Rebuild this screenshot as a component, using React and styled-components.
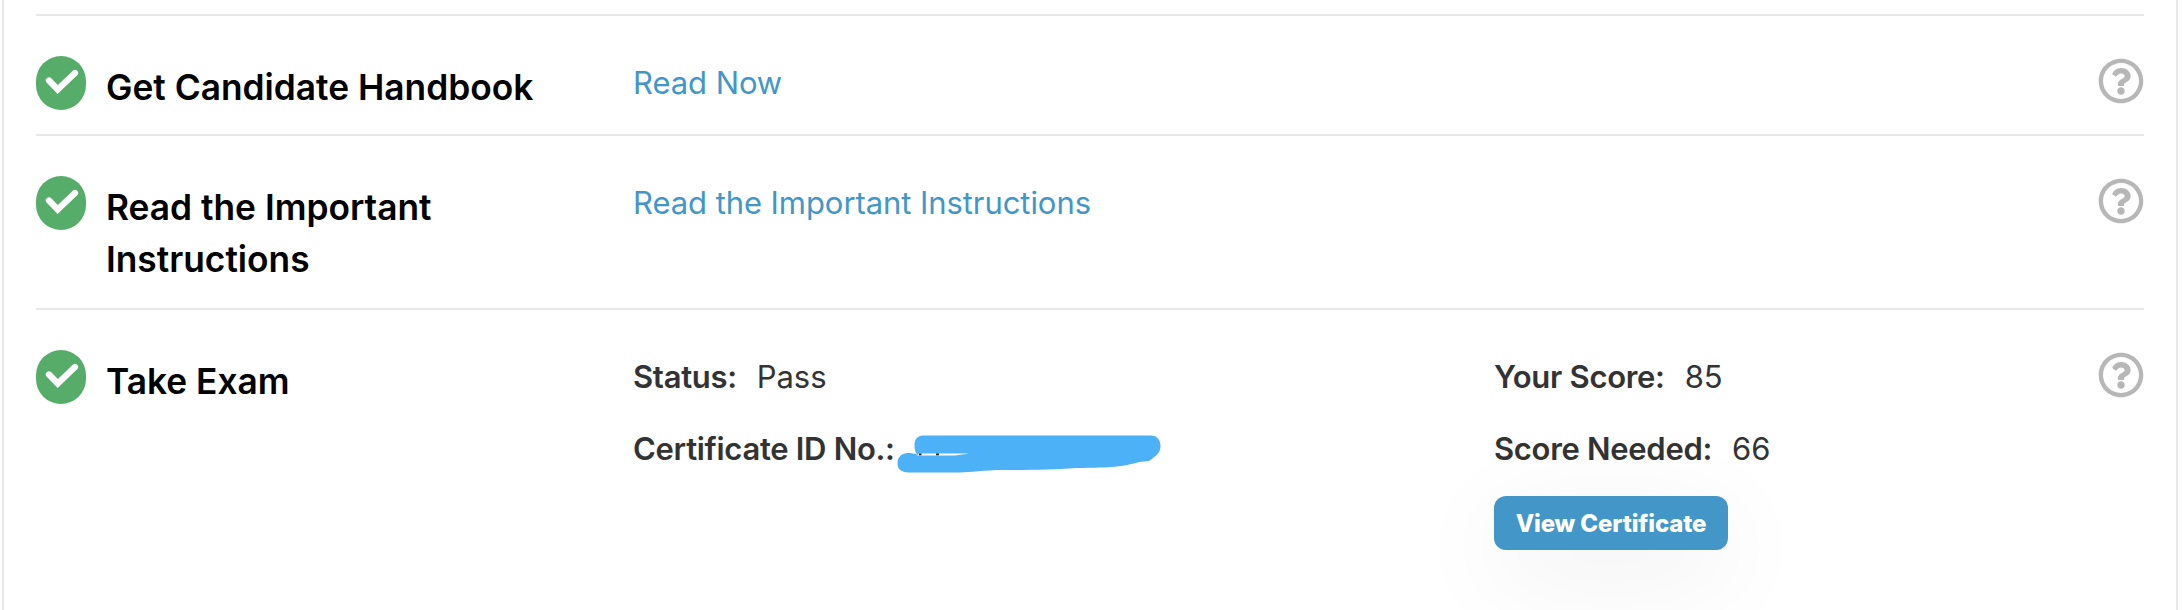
import React from 'react';
import styled, { createGlobalStyle } from 'styled-components';
import { FaRegQuestionCircle } from 'react-icons/fa';

const App = () => {
    return (
        <>
            <GlobalStyle />
            <Panel>
                <Step height="118px">
                    <Badge />
                    <Title>Get Candidate Handbook</Title>
                    <Details>
                        <StepLink href="#">Read Now</StepLink>
                    </Details>
                    <Help />
                </Step>
                <Step height="172px">
                    <Badge />
                    <Title>Read the Important Instructions</Title>
                    <Details>
                        <StepLink href="#">Read the Important Instructions</StepLink>
                    </Details>
                    <Help />
                </Step>
                <Step height="300px">
                    <Badge />
                    <Title>Take Exam</Title>
                    <Details>
                        <Field label="Status:" value="Pass" />
                        <Line>
                            <b>Certificate ID No.:</b>
                            <Redaction />
                        </Line>
                    </Details>
                    <Details>
                        <Field label="Your Score:" value="85" />
                        <Field label="Score Needed:" value="66" />
                        <Button type="button">View Certificate</Button>
                    </Details>
                    <Help />
                </Step>
            </Panel>
        </>
    );
};

const Field = ({ label, value }) => (
    <Line>
        <b>{label}</b>
        <span>{value}</span>
    </Line>
);

const Badge = () => (
    <BadgeCircle>
        <svg width="50" height="54" viewBox="0 0 50 54">
            <path d="M13 24.5 L21.7 33.5 L39 17" />
        </svg>
    </BadgeCircle>
);

const Help = () => (
    <HelpButton type="button" aria-label="Help">
        <FaRegQuestionCircle />
    </HelpButton>
);

const Redaction = () => (
    <Marker width="264" height="38" viewBox="0 0 264 38">
        <path
            fill="#4db1f8"
            d="M26 0.5 H254 C260 0.5 263.5 5 263.5 11 C263.5 17 260 20 256 23 C252 27 250 26 242 27 C225 32 216 32.5 180 33 C150 35 130 35 100 35 C80 36 70 37.5 58 37.5 H12 C4 37.5 0.5 34 0.5 28 C0.5 22 5 18 11 18 C14 18 18 18.5 20 19.5 C18 17 17.5 14 17.5 10 C17.5 4 21 0.5 26 0.5 Z"
        />
        <path fill="#fff" d="M22 18.4 H72 C64 19.5 62 20.2 56 20.6 H20 Z" />
        <path fill="#222" d="M22 18.4 h2.5 v1.8 h-2.5 Z M39 18.6 h3 v1.6 h-3 Z" />
    </Marker>
);

const GlobalStyle = createGlobalStyle`
  body {
    margin: 0;
    background: #fff;
    overflow: hidden;
    font-family: Inter, sans-serif;
  }

  * {
    box-sizing: border-box;
  }
`;

const Panel = styled.div`
  height: 610px;
  margin: 0 4px 0 2px;
  padding: 14px 32px 0;
  border: solid #e8e8e8;
  border-width: 0 2px;
  overflow: hidden;
`;

const Step = styled.div`
  display: grid;
  grid-template-columns: 70px 527px 861px 1fr 46px;
  height: calc(${({ height }) => height} + 2px);
  padding-top: 40px;
  border-top: 2px solid #e8e8e8;

  & > button {
    grid-column: 5;
  }
`;

const BadgeCircle = styled.span`
  width: 50px;
  height: 54px;
  border-radius: 27px;
  background: #56ad69;

  path {
    fill: none;
    stroke: #fff;
    stroke-width: 6.3;
    stroke-linecap: round;
  }
`;

const Title = styled.h3`
  width: 440px;
  margin: 6px 0 0;
  color: #000;
  font-size: 35.3px;
  font-weight: 600;
  line-height: 52px;
`;

const Details = styled.div`
  display: flex;
  flex-direction: column;
  align-items: flex-start;
  gap: 24px;
  padding-top: 3px;
  color: #333;
  font-size: 31px;
  letter-spacing: -0.07px;
  line-height: 48px;
`;

const StepLink = styled.a`
  color: #4297c8;
  text-decoration: none;
`;

const Line = styled.div`
  display: flex;
  gap: 20px;
  height: 48px;
  white-space: nowrap;

  b {
    font-weight: 600;
    letter-spacing: -0.3px;
  }
`;

const Marker = styled.svg`
  flex: none;
  margin: 10px 0 0 -18px;
`;

const Button = styled.button`
  width: 234px;
  height: 54px;
  margin-top: -1px;
  padding: 1px 0 0;
  border: 0;
  border-radius: 12px;
  background: #4297c8;
  box-shadow: 0 24px 100px rgba(0, 0, 0, 0.07);
  color: #fff;
  font: 800 24px/53px Inter, sans-serif;
  letter-spacing: -0.15px;
`;

const HelpButton = styled.button`
  display: flex;
  width: 46px;
  height: 46px;
  margin-top: 2px;
  padding: 0;
  border: 0;
  background: none;
  color: #b7b7b7;
  font-size: 46px;
`;

export default App;
